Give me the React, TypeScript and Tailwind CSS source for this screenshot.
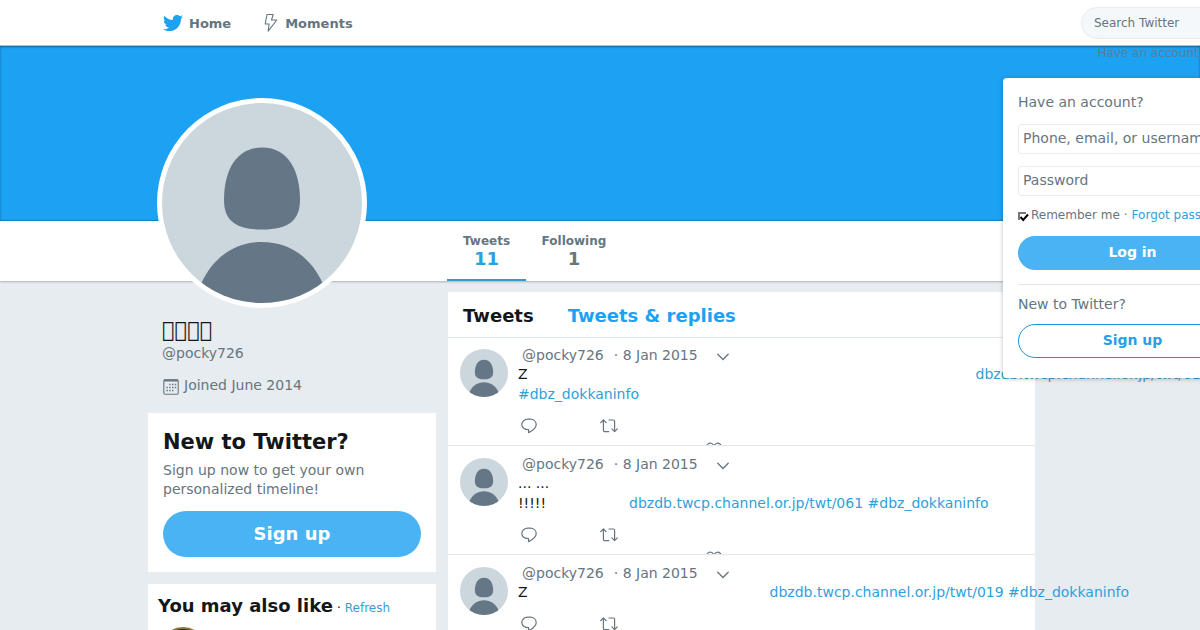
import React from 'react';
import { FaTwitter } from 'react-icons/fa';

interface Tweet {
  id: number;
  lines: React.ReactNode[];
}

const HASHTAG = '#dbz_dokkaninfo';

function TextLink({ children, className = '' }: { children: React.ReactNode; className?: string }) {
  return (
    <a href="#" className={`text-[#2f9fdb] hover:underline ${className}`}>
      {children}
    </a>
  );
}

const tweets: Tweet[] = [
  {
    id: 1,
    lines: [
      <>
        Z<TextLink className="ml-[448px]">dbzdb.twcp.channel.or.jp/twt/010</TextLink>
      </>,
      <TextLink>{HASHTAG}</TextLink>,
    ],
  },
  {
    id: 2,
    lines: [
      <>... ...</>,
      <>
        !!!!!<TextLink className="ml-[83px]">dbzdb.twcp.channel.or.jp/twt/061 {HASHTAG}</TextLink>
      </>,
    ],
  },
  {
    id: 3,
    lines: [
      <>
        Z<TextLink className="ml-[242px]">dbzdb.twcp.channel.or.jp/twt/019 {HASHTAG}</TextLink>
      </>,
    ],
  },
];

function Avatar({ className }: { className: string }) {
  return (
    <svg viewBox="0 0 200 200" className={`block shrink-0 rounded-full bg-[#ccd6dd] ${className}`} aria-hidden="true">
      <path
        fill="#657786"
        d="M100 44.500C73 44.500 62 69 62 97c0 20 11 29.500 38 29.500s38-9.500 38-29.500c0-28-11-52.500-38-52.500z"
      />
      <path fill="#657786" d="M100 139c-27 0-49 15-61 42v19h122v-19c-12-27-34-42-61-42z" />
    </svg>
  );
}

function BoltIcon() {
  return (
    <svg viewBox="0 0 14 20" className="h-5 w-3.5" fill="none" stroke="#66757f" strokeWidth="1.1" strokeLinejoin="round" aria-hidden="true">
      <path d="M3 1.5h6.2L7.5 7h5.3L4.2 18.2l.9-7.2H1.2z" />
    </svg>
  );
}

function CalendarIcon() {
  return (
    <svg viewBox="0 0 16 16" className="h-4 w-4" fill="none" aria-hidden="true">
      <rect x="0.8" y="0.8" width="14.4" height="14.4" rx="1.2" stroke="#66757f" strokeWidth="1.1" />
      <path d="M1 1.500h14" stroke="#66757f" strokeWidth="2" />
      <path
        d="M6.200 5.500h1.400M9 5.500h1.400M11.800 5.500h1.400M3.400 8.500h1.400M6.200 8.500h1.400M9 8.500h1.400M11.800 8.500h1.400M3.400 11.500h1.400M6.200 11.500h1.400M9 11.500h1.400"
        stroke="#66757f"
        strokeWidth="1.4"
      />
    </svg>
  );
}

function ReplyIcon() {
  return (
    <svg viewBox="0 0 16 16" className="h-4 w-4" fill="none" stroke="#66757f" strokeWidth="1.2" strokeLinejoin="round" aria-hidden="true">
      <path d="M6.9 1.2h2.2c3.5 0 6.1 2.2 6.1 5.3 0 3.8-3.3 6-7.6 8.2v-3C3.6 11.7.8 9.7.8 6.5c0-3.1 2.6-5.3 6.1-5.3z" />
    </svg>
  );
}

function RetweetIcon() {
  return (
    <svg viewBox="0 0 18 16" className="h-4 w-[18px]" fill="none" stroke="#66757f" strokeWidth="1.2" strokeLinecap="round" strokeLinejoin="round" aria-hidden="true">
      <path d="M.7 4.700 3.400 2l2.700 2.700M3.400 2v10.300c0 .8.500 1.300 1.300 1.300h4.100M9 2h4.300c.8 0 1.300.5 1.300 1.300v10.300M11.900 10.900l2.700 2.700 2.700-2.700" />
    </svg>
  );
}

function HeartIcon() {
  return (
    <svg viewBox="0 0 16 16" className="h-4 w-4" fill="none" stroke="#66757f" strokeWidth="1.2" aria-hidden="true">
      <path d="M8 4.2C7.3 2.3 6 1.1 4.4 1.1 2.2 1.1.7 3 .7 5.200.7 9.500 5.500 12.500 8 14.500c2.500-2 7.300-5 7.300-9.300 0-2.200-1.500-4.100-3.700-4.100C10 1.100 8.700 2.300 8 4.200z" />
    </svg>
  );
}

function ChevronIcon() {
  return (
    <svg viewBox="0 0 12 8" className="h-2 w-3" fill="none" stroke="#66757f" strokeWidth="1.3" strokeLinecap="round" aria-hidden="true">
      <path d="M.8 1.300 6 6.500l5.200-5.200" />
    </svg>
  );
}

function TopBar() {
  return (
    <header className="relative z-10 flex h-[46px] items-center border-b border-black/25 bg-white pl-[163px]">
      <nav className="flex flex-1 gap-[33px] text-[13px] font-bold text-[#66757f]">
        <a href="#" className="flex items-center gap-1.5">
          <FaTwitter className="h-5 w-5 text-[#1da1f2]" />
          <span className="pt-0.5">Home</span>
        </a>
        <a href="#" className="flex items-center gap-[7px]">
          <BoltIcon />
          <span className="pt-0.5">Moments</span>
        </a>
      </nav>
      <input
        type="search"
        aria-label="Search Twitter"
        placeholder="Search Twitter"
        className="-mr-[101px] h-8 w-[220px] shrink-0 rounded-full border border-[#e6ecf0] bg-[#f5f8fa] px-3 text-[12px] placeholder:text-[#66757f]"
      />
      <a href="#" className="absolute top-[45px] -right-[5px] text-[12px] leading-4 whitespace-nowrap text-[#66757f]/80">
        Have an account?
      </a>
    </header>
  );
}

function LoginMenu() {
  const fieldClass =
    'h-[30px] w-full rounded-[3px] border border-[#e6ecf0] px-1 pb-0.5 text-[14px] placeholder:text-[#66757f]';

  return (
    <form className="absolute top-[78px] -right-[62px] z-20 w-[259px] rounded bg-white px-[15px] pt-[15px] pb-5 text-[14px] text-[#66757f] shadow-[0_1px_4px_rgba(0,0,0,0.25)]">
      <p className="leading-[18px]">Have an account?</p>
      <input type="text" aria-label="Phone, email, or username" placeholder="Phone, email, or username" className={`mt-[13px] block ${fieldClass}`} />
      <input type="password" aria-label="Password" placeholder="Password" className={`mt-3 block ${fieldClass}`} />
      <div className="mt-[11px] flex h-4 items-center text-[12px] whitespace-nowrap">
        <label className="flex items-center">
          <span className="relative mr-[3px] block h-2.5 w-2.5">
            <input
              type="checkbox"
              defaultChecked
              className="peer mt-0.5 block h-2 w-2 appearance-none border-t-2 border-l-2 border-[#777] bg-white"
            />
            <svg viewBox="0 0 10 10" className="pointer-events-none absolute top-0.5 left-px hidden h-2.5 w-2.5 peer-checked:block" fill="none" stroke="black" strokeWidth="2" aria-hidden="true">
              <path d="M1.5 5 4.2 8 9 2.5" />
            </svg>
          </span>
          Remember me
        </label>
        <span className="mx-1">·</span>
        <TextLink>Forgot password?</TextLink>
      </div>
      <button type="submit" className="mt-[13px] block h-[34px] w-full rounded-full bg-[#4ab3f4] pb-0.5 font-bold text-white">
        Log in
      </button>
      <div className="mt-3.5 border-t border-[#e1e8ed] pt-2.5">
        <p className="leading-[18px]">New to Twitter?</p>
        <button type="button" className="mt-[11px] block h-[34px] w-full rounded-full border border-[#1b95d9] pb-0.5 font-bold text-[#2a9fe5]">
          Sign up
        </button>
      </div>
    </form>
  );
}

function ProfileHeader() {
  return (
    <section>
      <div className="h-[175px] bg-[#1da1f2] shadow-[inset_0_1px_2px_rgba(0,0,0,0.4),inset_0_-1px_1px_rgba(0,0,0,0.2)]" />
      <div className="flex h-[60px] bg-white pl-[157px] shadow-[0_1px_2px_rgba(0,0,0,0.25)]">
        <div className="relative z-10 -mt-[123px] mr-20 h-[210px] w-[210px] shrink-0 rounded-full bg-white p-[5px]">
          <Avatar className="h-[200px] w-[200px]" />
        </div>
        <nav className="flex text-center text-[12px] font-bold text-[#66757f]">
          <a href="#" className="w-[79px] border-b-2 border-[#3a97cf] pt-3">
            <span className="block leading-4">Tweets</span>
            <span className="block text-[18px] leading-5 text-[#2f9fdb]">11</span>
          </a>
          <a href="#" className="w-24 pt-3">
            <span className="block leading-4">Following</span>
            <span className="block text-[18px] leading-5">1</span>
          </a>
        </nav>
      </div>
    </section>
  );
}

function Sidebar() {
  return (
    <aside className="w-72 shrink-0">
      <div className="px-3.5 pt-[37px] pb-[18px] text-[14px] text-[#66757f]">
        <h1 className="text-[21px] leading-[25px] text-[#14171a]">{'\u{F0FF0}\u{F0FF1}\u{F0FF2}\u{F0FF3}'}</h1>
        <p className="leading-5">@pocky726</p>
        <p className="mt-3 flex items-center gap-[5px] leading-5">
          <span className="pl-px pt-1">
            <CalendarIcon />
          </span>
          Joined June 2014
        </p>
      </div>

      <section className="bg-white px-[15px] pt-4 pb-[15px]">
        <h2 className="text-[21px] leading-[26px] font-bold text-[#14171a]">New to Twitter?</h2>
        <p className="mt-1.5 text-[14px] leading-[19px] text-[#66757f]">Sign up now to get your own personalized timeline!</p>
        <button type="button" className="mt-3 block h-[46px] w-full rounded-full bg-[#4ab3f4] pb-0.5 text-[18px] font-bold text-white">
          Sign up
        </button>
      </section>

      <section className="mt-3 bg-white px-2.5 pt-2.5">
        <div className="flex h-6 items-baseline text-[12px] leading-6">
          <h2 className="text-[18px] font-bold text-[#14171a]">You may also like</h2>
          <span className="mx-1">·</span>
          <TextLink>Refresh</TextLink>
        </div>
        <div className="mt-[9px] ml-px h-12 w-12 rounded-full border-2 border-[#8a7a3c] bg-[#2a2622]" />
      </section>
    </aside>
  );
}

function TweetItem({ tweet }: { tweet: Tweet }) {
  return (
    <li className="flex border-b border-[#e1e8ed] pt-[9px] pl-3">
      <Avatar className="mt-[3px] h-12 w-12" />
      <div className="ml-2.5 min-w-0 flex-1 text-[14px]">
        <div className="flex h-[18px] items-center pl-1 text-[#66757f]">
          <a href="#">@pocky726</a>
          <time className="ml-2.5">· 8 Jan 2015</time>
          <button type="button" aria-label="More" className="ml-[19px] pt-[3px]">
            <ChevronIcon />
          </button>
        </div>
        <div className="leading-5 whitespace-nowrap text-[#14171a]">
          {tweet.lines.map((line, i) => (
            <p key={i}>{line}</p>
          ))}
        </div>
        <div className="flex h-[41px] items-start overflow-hidden pt-3.5 pl-[3px]">
          <button type="button" aria-label="Reply" className="w-[79px]">
            <ReplyIcon />
          </button>
          <button type="button" aria-label="Retweet" className="w-[106px]">
            <RetweetIcon />
          </button>
          <button type="button" aria-label="Like" className="mt-6">
            <HeartIcon />
          </button>
        </div>
      </div>
    </li>
  );
}

function Timeline() {
  return (
    <main className="w-[587px] shrink-0 self-start bg-white">
      <div className="flex h-[46px] items-center gap-[34px] border-b border-[#e1e8ed] px-[15px] pt-px text-[18px] font-bold">
        <h2 className="text-[#14171a]">Tweets</h2>
        <a href="#" className="text-[#1da1f2]">
          Tweets &amp; replies
        </a>
      </div>
      <ol className="-mt-px">
        {tweets.map((tweet) => (
          <TweetItem key={tweet.id} tweet={tweet} />
        ))}
      </ol>
    </main>
  );
}

export default function App() {
  return (
    <div className="relative h-screen overflow-hidden bg-[#e6ecf0] font-['DejaVu_Sans',sans-serif]">
      <TopBar />
      <LoginMenu />
      <ProfileHeader />
      <div className="flex gap-3 pl-[148px]">
        <Sidebar />
        <div className="pt-[11px]">
          <Timeline />
        </div>
      </div>
    </div>
  );
}
